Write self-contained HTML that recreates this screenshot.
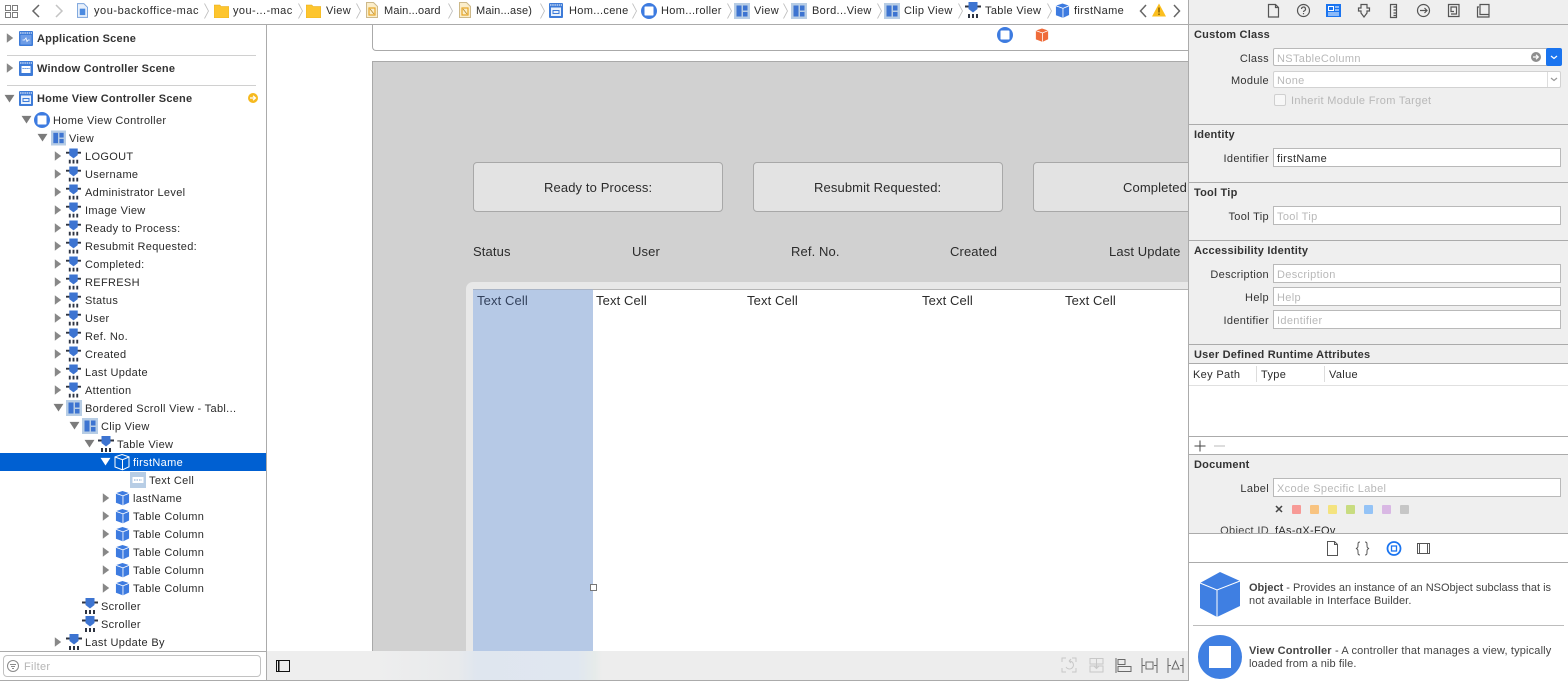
<!DOCTYPE html>
<html><head><meta charset="utf-8">
<style>
html,body{margin:0;padding:0;background:#fff}
#r{position:relative;width:1568px;height:681px;overflow:hidden;background:#fff;font-family:"Liberation Sans",sans-serif;font-size:11px;color:#2a2a2a}
#r div,#r span,#r svg{position:absolute}
#r svg{overflow:visible}
.t{white-space:nowrap;line-height:18px;height:18px;letter-spacing:.33px;margin-top:1px}
.b{font-weight:bold;letter-spacing:.22px;color:#333}
.c{font-size:13px;letter-spacing:.12px;color:#2b2b2b}
.l{text-align:right;right:299px;color:#333}
.f{left:1273px;width:286px;background:#fff;border:1px solid #b9b9b9}
.p{color:#b8b8b8}
.ln{height:1px;background:#ababab}
.btn{top:162px;height:48px;background:#e3e3e3;border:1px solid #a8a8a8;border-radius:4px}
</style></head><body><div id="r">
<svg width="0" height="0" style="left:0;top:0">
<defs>
<symbol id="v" viewBox="0 0 16 16"><rect width="16" height="16" fill="#b7cde5"/><rect x="2.500" y="2.500" width="5" height="11" fill="#3d74d1"/><rect x="9" y="2.500" width="4.500" height="5" fill="#3d74d1"/><rect x="9" y="9" width="4.500" height="4.500" fill="#3d74d1"/></symbol>
<symbol id="n" viewBox="0 0 16 16"><rect x="0" y="3.500" width="16" height="2" fill="#2d3340"/><path d="M3.500 0h9v7L8 10.500 3.500 7z" fill="#3d74d1"/><rect x="3" y="12" width="2" height="4" fill="#2d3340"/><rect x="7" y="12" width="2" height="4" fill="#2d3340"/><rect x="11" y="12" width="2" height="4" fill="#2d3340"/></symbol>
<symbol id="q" viewBox="0 0 16 16"><path d="M8 .5l7 2.300v10L8.500 15.800 1 13V2.800z" fill="#3d7be0"/><path d="M1 3l7.500 2.700L15 3M8.500 5.700v10" fill="none" stroke="#fff" stroke-width=".9"/></symbol>
<symbol id="s" viewBox="0 0 14 15"><rect width="14" height="15" rx="1" fill="#3d7bd8"/><path d="M1 2h12" stroke="#fff" stroke-width="1" stroke-dasharray="1.500 .7"/></symbol>
<symbol id="c" viewBox="0 0 16 16"><circle cx="8" cy="8" r="8" fill="#3d7be0"/><rect x="3.500" y="3.500" width="9" height="9" rx=".8" fill="#fff"/></symbol>
<symbol id="dn" viewBox="0 0 10 10" overflow="visible"><path d="M-.5 1h11L5 9.500z" fill="#7b7b7b"/></symbol>
<symbol id="rt" viewBox="0 0 10 10" overflow="visible"><path d="M1-1v12l8-6z" fill="#888"/></symbol>
<symbol id="fd" viewBox="0 0 15 14"><path d="M0 1h6l1 1.500h8V14H0z" fill="#fdc52e" stroke="#e5a813" stroke-width=".5"/></symbol>
<symbol id="sb" viewBox="0 0 12 16"><path d="M.5.500h7l4 4v11H.5z" fill="#fbeecb" stroke="#cdb98a"/><rect x="3" y="6" width="6" height="7" fill="none" stroke="#e6a526" stroke-width="1.200"/><path d="M4 7l4 5" stroke="#b98a2a" stroke-width=".8"/></symbol>
<symbol id="sp" viewBox="0 0 5 16"><path d="M.5.500L4.500 8 .5 15.500" fill="none" stroke="#bdbdbd" stroke-width=".8"/></symbol>
</defs></svg>

<!-- canvas -->
<div style="left:372px;top:24px;width:816px;height:26px;border-left:1px solid #aaa;border-bottom:1px solid #aaa;border-bottom-left-radius:4px;background:#fff"></div>
<div style="left:372px;top:61px;width:816px;height:590px;background:#d1d1d1;border-left:1px solid #a9a9a9;border-top:1px solid #a9a9a9;box-sizing:border-box"></div>
<svg style="left:997px;top:27px" width="16" height="16"><use href="#c"/></svg>
<svg style="left:1035px;top:28px" width="14" height="14" viewBox="0 0 16 16"><path d="M8 .5l7 2.300v10L8.500 15.800 1 13V2.800z" fill="#ef6b3a"/><path d="M1 3l7.500 2.700L15 3M8.500 5.700v10" fill="none" stroke="#fff" stroke-width=".9"/></svg>
<div class="btn" style="left:473px;width:248px"></div>
<div class="btn" style="left:753px;width:248px"></div>
<div class="btn" style="left:1033px;width:170px"></div>
<div class="t c" style="left:544px;top:178px">Ready to Process:</div>
<div class="t c" style="left:814px;top:178px">Resubmit Requested:</div>
<div class="t c" style="left:1123px;top:178px;width:65px;overflow:hidden">Completed:</div>
<div class="t c" style="left:473px;top:242px">Status</div>
<div class="t c" style="left:632px;top:242px">User</div>
<div class="t c" style="left:791px;top:242px">Ref. No.</div>
<div class="t c" style="left:950px;top:242px">Created</div>
<div class="t c" style="left:1109px;top:242px">Last Update</div>
<div style="left:466px;top:282px;width:722px;height:369px;background:#e8e8e8;border-top-left-radius:7px"></div>
<div style="left:473px;top:289px;width:715px;height:362px;background:#fff;border-top:1px solid #b5b5b5;box-sizing:border-box"></div>
<div style="left:473px;top:289px;width:120px;height:362px;background:#b6c9e6;border-top:1px solid #a9b4c6;box-sizing:border-box"></div>
<div class="t c" style="left:477px;top:291px;color:#33415c">Text Cell</div>
<div class="t c" style="left:596px;top:291px">Text Cell</div>
<div class="t c" style="left:747px;top:291px">Text Cell</div>
<div class="t c" style="left:922px;top:291px">Text Cell</div>
<div class="t c" style="left:1065px;top:291px">Text Cell</div>
<div style="left:590px;top:584px;width:5px;height:5px;background:#fff;border:1px solid #777"></div>

<!-- canvas bottom bar -->
<div style="left:267px;top:651px;width:921px;height:29px;background:linear-gradient(90deg,#eee 0,#eee 105px,#e8eaec 190px,#dfe6ef 210px,#e0e7f0 310px,#e6ebea 328px,#ededed 335px,#ededed 100%)"></div>
<div class="ln" style="left:267px;top:680px;width:921px"></div>
<svg style="left:276px;top:660px" width="14" height="12"><rect x=".5" y=".5" width="13" height="11" fill="none" stroke="#111"/><rect x="2" y="1" width="1.500" height="10" fill="#111"/></svg>
<svg style="left:1061px;top:657px" width="124" height="18" fill="none" stroke="#6a6a6a" stroke-width="1">
<g stroke="#c8c8c8"><path d="M1 5V1h4M11 1h4v4M15 11v4h-4M5 15H1v-4"/><path d="M8 4a4 4 0 1 1-3 6M8 4l2-2M8 4l2 2"/></g>
<g stroke="#c8c8c8"><rect x="29" y="1.500" width="13" height="5.500"/><rect x="29" y="9" width="13" height="6"/><path d="M35.500 1v10M33 9l2.500 2.500L38 9"/></g>
<path d="M55 1v15M57 2.500h7v5h-7zM57 9.500h13v5H57z"/>
<path d="M81 1v15M96 1v15M81 8.500h3M93 8.500h3M85 5h7v7h-7z"/>
<path d="M107 1v15M122 1v15M107 8.500h3M119 8.500h3M114.500 4l3.500 8h-7z"/>
</svg>

<!-- left panel -->
<div style="left:0;top:25px;width:266px;height:656px;background:#fff"></div>
<div style="left:266px;top:24px;width:1px;height:657px;background:#ababab"></div>
<svg style="left:6px;top:34px" width="8" height="8"><use href="#rt"/></svg>
<svg style="left:19px;top:31px" width="14" height="15"><use href="#s"/><rect x="1.500" y="4" width="11" height="9.500" fill="#6d9ce6"/><path d="M3.500 9l2 0 1.500-2 1 3.500 1.200-1.500h1.500" fill="none" stroke="#fff" stroke-width=".8"/></svg>
<div class="t b" style="left:37px;top:29px">Application Scene</div>
<div class="ln" style="left:7px;top:55px;width:249px;background:#d0d0d0"></div>
<svg style="left:6px;top:64px" width="8" height="8"><use href="#rt"/></svg>
<svg style="left:19px;top:61px" width="14" height="15"><use href="#s"/><rect x="2.500" y="5" width="9" height="7" fill="#fff"/><path d="M3.500 7.500h7" stroke="#3d7bd8" stroke-dasharray="1.200 .8"/></svg>
<div class="t b" style="left:37px;top:59px">Window Controller Scene</div>
<div class="ln" style="left:7px;top:85px;width:249px;background:#d0d0d0"></div>
<svg style="left:5px;top:94px" width="9" height="9"><use href="#dn"/></svg>
<svg style="left:19px;top:91px" width="14" height="15"><use href="#s"/><rect x="2" y="4.500" width="10" height="8.500" fill="#e9f1fc"/><rect x="4" y="7.500" width="6" height="3" fill="none" stroke="#3d7bd8"/></svg>
<div class="t b" style="left:37px;top:89px">Home View Controller Scene</div>
<svg style="left:248px;top:93px" width="10" height="10"><circle cx="5" cy="5" r="5" fill="#f6b91f"/><path d="M2 5h5M5 2.800L7.500 5 5 7.200" stroke="#fff" stroke-width="1.200" fill="none"/></svg>

<svg style="left:22px;top:115px" width="9" height="9"><use href="#dn"/></svg>
<svg style="left:34px;top:112px" width="16" height="16"><use href="#c"/></svg>
<div class="t" style="left:53px;top:111px">Home View Controller</div>
<svg style="left:38px;top:133px" width="9" height="9"><use href="#dn"/></svg>
<svg style="left:51px;top:130px" width="15" height="16"><use href="#v"/></svg>
<div class="t" style="left:69px;top:129px">View</div>

<svg style="left:54px;top:152px" width="8" height="8"><use href="#rt"/></svg><svg style="left:66px;top:148px" width="15" height="16"><use href="#n"/></svg><div class="t" style="left:85px;top:147px">LOGOUT</div>
<svg style="left:54px;top:170px" width="8" height="8"><use href="#rt"/></svg><svg style="left:66px;top:166px" width="15" height="16"><use href="#n"/></svg><div class="t" style="left:85px;top:165px">Username</div>
<svg style="left:54px;top:188px" width="8" height="8"><use href="#rt"/></svg><svg style="left:66px;top:184px" width="15" height="16"><use href="#n"/></svg><div class="t" style="left:85px;top:183px">Administrator Level</div>
<svg style="left:54px;top:206px" width="8" height="8"><use href="#rt"/></svg><svg style="left:66px;top:202px" width="15" height="16"><use href="#n"/></svg><div class="t" style="left:85px;top:201px">Image View</div>
<svg style="left:54px;top:224px" width="8" height="8"><use href="#rt"/></svg><svg style="left:66px;top:220px" width="15" height="16"><use href="#n"/></svg><div class="t" style="left:85px;top:219px">Ready to Process:</div>
<svg style="left:54px;top:242px" width="8" height="8"><use href="#rt"/></svg><svg style="left:66px;top:238px" width="15" height="16"><use href="#n"/></svg><div class="t" style="left:85px;top:237px">Resubmit Requested:</div>
<svg style="left:54px;top:260px" width="8" height="8"><use href="#rt"/></svg><svg style="left:66px;top:256px" width="15" height="16"><use href="#n"/></svg><div class="t" style="left:85px;top:255px">Completed:</div>
<svg style="left:54px;top:278px" width="8" height="8"><use href="#rt"/></svg><svg style="left:66px;top:274px" width="15" height="16"><use href="#n"/></svg><div class="t" style="left:85px;top:273px">REFRESH</div>
<svg style="left:54px;top:296px" width="8" height="8"><use href="#rt"/></svg><svg style="left:66px;top:292px" width="15" height="16"><use href="#n"/></svg><div class="t" style="left:85px;top:291px">Status</div>
<svg style="left:54px;top:314px" width="8" height="8"><use href="#rt"/></svg><svg style="left:66px;top:310px" width="15" height="16"><use href="#n"/></svg><div class="t" style="left:85px;top:309px">User</div>
<svg style="left:54px;top:332px" width="8" height="8"><use href="#rt"/></svg><svg style="left:66px;top:328px" width="15" height="16"><use href="#n"/></svg><div class="t" style="left:85px;top:327px">Ref. No.</div>
<svg style="left:54px;top:350px" width="8" height="8"><use href="#rt"/></svg><svg style="left:66px;top:346px" width="15" height="16"><use href="#n"/></svg><div class="t" style="left:85px;top:345px">Created</div>
<svg style="left:54px;top:368px" width="8" height="8"><use href="#rt"/></svg><svg style="left:66px;top:364px" width="15" height="16"><use href="#n"/></svg><div class="t" style="left:85px;top:363px">Last Update</div>
<svg style="left:54px;top:386px" width="8" height="8"><use href="#rt"/></svg><svg style="left:66px;top:382px" width="15" height="16"><use href="#n"/></svg><div class="t" style="left:85px;top:381px">Attention</div>

<svg style="left:54px;top:403px" width="9" height="9"><use href="#dn"/></svg><svg style="left:66px;top:400px" width="16" height="16"><use href="#v"/></svg><div class="t" style="left:85px;top:399px">Bordered Scroll View - Tabl...</div>
<svg style="left:70px;top:421px" width="9" height="9"><use href="#dn"/></svg><svg style="left:82px;top:418px" width="16" height="16"><use href="#v"/></svg><div class="t" style="left:101px;top:417px">Clip View</div>
<svg style="left:85px;top:439px" width="9" height="9"><use href="#dn"/></svg><svg style="left:98px;top:436px" width="16" height="16"><use href="#n"/></svg><div class="t" style="left:117px;top:435px">Table View</div>

<div style="left:0;top:453px;width:266px;height:18px;background:#0060d2"></div>
<svg style="left:101px;top:457px" width="9" height="9" viewBox="0 0 10 10"><path d="M-.5 1h11L5 9.500z" fill="#fff"/></svg>
<svg style="left:114px;top:454px" width="16" height="16" viewBox="0 0 16 16"><path d="M8 .5l7 2.300v10L8.500 15.800 1 13V2.800z" fill="none" stroke="#fff"/><path d="M1 3l7.500 2.700L15 3M8.500 5.700v10" fill="none" stroke="#fff"/></svg>
<div class="t" style="left:133px;top:453px;color:#fff">firstName</div>

<svg style="left:130px;top:472px" width="16" height="16"><rect width="16" height="16" fill="#b7cde5"/><rect x="2.500" y="5" width="11" height="6" fill="#fff"/><path d="M4 8h8" stroke="#7fa2cc" stroke-dasharray="1.500 1"/></svg>
<div class="t" style="left:149px;top:471px">Text Cell</div>

<svg style="left:102px;top:494px" width="8" height="8"><use href="#rt"/></svg><svg style="left:115px;top:490px" width="15" height="16"><use href="#q"/></svg><div class="t" style="left:133px;top:489px">lastName</div>
<svg style="left:102px;top:512px" width="8" height="8"><use href="#rt"/></svg><svg style="left:115px;top:508px" width="15" height="16"><use href="#q"/></svg><div class="t" style="left:133px;top:507px">Table Column</div>
<svg style="left:102px;top:530px" width="8" height="8"><use href="#rt"/></svg><svg style="left:115px;top:526px" width="15" height="16"><use href="#q"/></svg><div class="t" style="left:133px;top:525px">Table Column</div>
<svg style="left:102px;top:548px" width="8" height="8"><use href="#rt"/></svg><svg style="left:115px;top:544px" width="15" height="16"><use href="#q"/></svg><div class="t" style="left:133px;top:543px">Table Column</div>
<svg style="left:102px;top:566px" width="8" height="8"><use href="#rt"/></svg><svg style="left:115px;top:562px" width="15" height="16"><use href="#q"/></svg><div class="t" style="left:133px;top:561px">Table Column</div>
<svg style="left:102px;top:584px" width="8" height="8"><use href="#rt"/></svg><svg style="left:115px;top:580px" width="15" height="16"><use href="#q"/></svg><div class="t" style="left:133px;top:579px">Table Column</div>
<svg style="left:82px;top:598px" width="16" height="16"><use href="#n"/></svg><div class="t" style="left:101px;top:597px">Scroller</div>
<svg style="left:82px;top:616px" width="16" height="16"><use href="#n"/></svg><div class="t" style="left:101px;top:615px">Scroller</div>
<svg style="left:54px;top:638px" width="8" height="8"><use href="#rt"/></svg><svg style="left:66px;top:634px" width="16" height="16"><use href="#n"/></svg><div class="t" style="left:85px;top:633px">Last Update By</div>

<div style="left:0;top:651px;width:266px;height:29px;background:#fff;border-top:1px solid #ababab;box-sizing:border-box"></div>
<div style="left:3px;top:655px;width:256px;height:20px;border:1px solid #c2c2c2;border-radius:4px;background:#fff"></div>
<svg style="left:7px;top:660px" width="12" height="12" fill="none" stroke="#8a8a8a"><circle cx="6" cy="6" r="5.500"/><path d="M3 4.500h6M4 6.500h4M5 8.500h2"/></svg>
<div class="t" style="left:24px;top:657px;color:#b5b5b5">Filter</div>
<div class="ln" style="left:0;top:680px;width:267px"></div>

<!-- top bar -->
<div style="left:0;top:0;width:1188px;height:24px;background:#fff"></div>
<div class="ln" style="left:0;top:24px;width:1188px"></div>
<svg style="left:5px;top:5px" width="13" height="13" fill="none" stroke="#6e6e6e" stroke-width=".9"><rect x=".5" y=".5" width="5" height="5"/><rect x="7.500" y=".5" width="5" height="5"/><rect x=".5" y="7.500" width="5" height="5"/><rect x="7.500" y="7.500" width="5" height="5"/></svg>
<svg style="left:31px;top:4px" width="10" height="14" fill="none" stroke="#666" stroke-width="1.500"><path d="M8 1L2 7l6 6"/></svg>
<svg style="left:54px;top:4px" width="10" height="14" fill="none" stroke="#c4c4c4" stroke-width="1.500"><path d="M2 1l6 6-6 6"/></svg>
<svg style="left:77px;top:3px" width="11" height="15" viewBox="0 0 12 16"><path d="M.5.500h7l4 4v11H.5z" fill="#e8f0fb" stroke="#7aa3dc"/><rect x="3" y="6" width="6" height="7" fill="#4b8ae0"/></svg>
<div class="t" style="left:94px;top:1px;letter-spacing:.55px">you-backoffice-mac</div>
<svg style="left:204px;top:3px" width="5" height="16"><use href="#sp"/></svg>
<svg style="left:214px;top:4px" width="15" height="14"><use href="#fd"/></svg>
<div class="t" style="left:233px;top:1px;letter-spacing:.42px">you-...-mac</div>
<svg style="left:298px;top:3px" width="5" height="16"><use href="#sp"/></svg>
<svg style="left:306px;top:4px" width="15" height="14"><use href="#fd"/></svg>
<div class="t" style="left:326px;top:1px">View</div>
<svg style="left:356px;top:3px" width="5" height="16"><use href="#sp"/></svg>
<svg style="left:366px;top:2px" width="12" height="16"><use href="#sb"/></svg>
<div class="t" style="left:384px;top:1px;letter-spacing:.15px">Main...oard</div>
<svg style="left:448px;top:3px" width="5" height="16"><use href="#sp"/></svg>
<svg style="left:459px;top:2px" width="12" height="16"><use href="#sb"/></svg>
<div class="t" style="left:476px;top:1px;letter-spacing:.15px">Main...ase)</div>
<svg style="left:540px;top:3px" width="5" height="16"><use href="#sp"/></svg>
<svg style="left:549px;top:3px" width="14" height="15"><use href="#s"/><rect x="2" y="4.500" width="10" height="8.500" fill="#e9f1fc"/><rect x="4" y="7.500" width="6" height="3" fill="none" stroke="#3d7bd8"/></svg>
<div class="t" style="left:569px;top:1px">Hom...cene</div>
<svg style="left:632px;top:3px" width="5" height="16"><use href="#sp"/></svg>
<svg style="left:641px;top:3px" width="16" height="16"><use href="#c"/></svg>
<div class="t" style="left:661px;top:1px">Hom...roller</div>
<svg style="left:727px;top:3px" width="5" height="16"><use href="#sp"/></svg>
<svg style="left:734px;top:3px" width="16" height="16"><use href="#v"/></svg>
<div class="t" style="left:754px;top:1px">View</div>
<svg style="left:783px;top:3px" width="5" height="16"><use href="#sp"/></svg>
<svg style="left:791px;top:3px" width="16" height="16"><use href="#v"/></svg>
<div class="t" style="left:812px;top:1px">Bord...View</div>
<svg style="left:877px;top:3px" width="5" height="16"><use href="#sp"/></svg>
<svg style="left:884px;top:3px" width="16" height="16"><use href="#v"/></svg>
<div class="t" style="left:904px;top:1px">Clip View</div>
<svg style="left:958px;top:3px" width="5" height="16"><use href="#sp"/></svg>
<svg style="left:965px;top:2px" width="16" height="16"><use href="#n"/></svg>
<div class="t" style="left:985px;top:1px">Table View</div>
<svg style="left:1047px;top:3px" width="5" height="16"><use href="#sp"/></svg>
<svg style="left:1055px;top:3px" width="15" height="15"><use href="#q"/></svg>
<div class="t" style="left:1074px;top:1px">firstName</div>
<svg style="left:1139px;top:4px" width="9" height="14" fill="none" stroke="#666" stroke-width="1.500"><path d="M7 1L1.500 7 7 13"/></svg>
<svg style="left:1152px;top:3px" width="14" height="14"><path d="M7 .5l7 13H0z" fill="#fbbf1f"/><path d="M7 4.500v5M7 10.500v1.500" stroke="#6a4a00" stroke-width="1.200"/></svg>
<svg style="left:1172px;top:4px" width="9" height="14" fill="none" stroke="#666" stroke-width="1.500"><path d="M2 1l5.500 6L2 13"/></svg>

<!-- inspector -->
<div style="left:1188px;top:0;width:1px;height:681px;background:#ababab;z-index:5"></div>
<div style="left:1189px;top:0;width:379px;height:533px;background:#efefef"></div>
<div class="ln" style="left:1189px;top:24px;width:379px"></div>
<svg style="left:1260px;top:0" width="240" height="24" fill="none" stroke="#555" stroke-width="1.200">
<path d="M8.500 4.500h7l3 3v9.500h-10zM15.500 4.500v3h3"/>
<circle cx="43.500" cy="10.500" r="6"/><path d="M41.500 9a2 2 0 1 1 2.700 1.900c-.5.200-.7.500-.7 1.100M43.500 13v1.200"/>
<rect x="66" y="4" width="15" height="13" fill="#1a74f0" stroke="none"/><rect x="68.500" y="6.500" width="5" height="4" stroke="#fff" stroke-width="1"/><path d="M75 7h4M75 10h4M68 13h11M68 15h11" stroke="#fff" stroke-width="1"/>
<path d="M101 4.500h6v3.500h2.500v3H107v2l-3 4-3-4v-2h-2.500V8H101z"/>
<path d="M130.500 4.500h6v13h-6zM133.500 7h3M133.500 10h3M133.500 13h3M133.500 15.500h3"/>
<circle cx="163.500" cy="10.500" r="6"/><path d="M160 10.500h7M164.500 8l2.500 2.500-2.500 2.500"/>
<path d="M188.500 4.500h10.500v12h-10.500zM191 14h5.500V7H191v4.500h3"/>
<path d="M219 7h-1.500v10h11.500V4.500M220 4.500h9v10h-9z"/>
</svg>

<div class="t b" style="left:1194px;top:25px">Custom Class</div>
<div class="t l" style="top:49px">Class</div>
<div class="f" style="top:48px;height:16px;border-radius:2px"></div>
<div class="t p" style="left:1277px;top:49px">NSTableColumn</div>
<svg style="left:1531px;top:52px" width="10" height="10"><circle cx="5" cy="5" r="5" fill="#8e8e8e"/><path d="M2 5h5M5 2.800L7.300 5 5 7.200" stroke="#fff" stroke-width="1.200" fill="none"/></svg>
<svg style="left:1546px;top:48px" width="16" height="18"><rect width="16" height="18" rx="2" fill="#1a74ef"/><path d="M5 8l3 2.500L11 8" stroke="#fff" stroke-width="1.200" fill="none"/></svg>
<div class="t l" style="top:71px">Module</div>
<div class="f" style="top:71px;height:15px;border-radius:2px;border-color:#d2d2d2"></div>
<div class="t p" style="left:1277px;top:71px">None</div>
<svg style="left:1547px;top:72px" width="14" height="15"><path d="M.5 0v15" stroke="#ddd"/><path d="M4 6l3 2.500L10 6" stroke="#999" stroke-width="1.200" fill="none"/></svg>
<div style="left:1274px;top:94px;width:10px;height:10px;background:#f7f7f7;border:1px solid #cfcfcf;border-radius:2px"></div>
<div class="t p" style="left:1291px;top:91px">Inherit Module From Target</div>
<div class="ln" style="left:1189px;top:124px;width:379px"></div>

<div class="t b" style="left:1194px;top:125px">Identity</div>
<div class="t l" style="top:149px">Identifier</div>
<div class="f" style="top:148px;height:17px"></div>
<div class="t" style="left:1277px;top:149px">firstName</div>
<div class="ln" style="left:1189px;top:182px;width:379px"></div>

<div class="t b" style="left:1194px;top:183px">Tool Tip</div>
<div class="t l" style="top:207px">Tool Tip</div>
<div class="f" style="top:206px;height:17px"></div>
<div class="t p" style="left:1277px;top:207px">Tool Tip</div>
<div class="ln" style="left:1189px;top:240px;width:379px"></div>

<div class="t b" style="left:1194px;top:241px">Accessibility Identity</div>
<div class="t l" style="top:265px">Description</div>
<div class="f" style="top:264px;height:17px"></div>
<div class="t p" style="left:1277px;top:265px">Description</div>
<div class="t l" style="top:288px">Help</div>
<div class="f" style="top:287px;height:17px"></div>
<div class="t p" style="left:1277px;top:288px">Help</div>
<div class="t l" style="top:311px">Identifier</div>
<div class="f" style="top:310px;height:17px"></div>
<div class="t p" style="left:1277px;top:311px">Identifier</div>
<div class="ln" style="left:1189px;top:344px;width:379px"></div>

<div class="t b" style="left:1194px;top:345px">User Defined Runtime Attributes</div>
<div style="left:1189px;top:363px;width:379px;height:91px;background:#fff"></div>
<div class="ln" style="left:1189px;top:363px;width:379px"></div>
<div class="t" style="left:1193px;top:365px">Key Path</div>
<div class="t" style="left:1261px;top:365px">Type</div>
<div class="t" style="left:1329px;top:365px">Value</div>
<div style="left:1256px;top:366px;width:1px;height:16px;background:#ddd"></div>
<div style="left:1324px;top:366px;width:1px;height:16px;background:#ddd"></div>
<div style="left:1189px;top:385px;width:379px;height:1px;background:#e0e0e0"></div>
<div class="ln" style="left:1189px;top:436px;width:379px"></div>
<svg style="left:1194px;top:440px" width="40" height="12" fill="none"><path d="M6 .5v11M.5 6h11" stroke="#444"/><path d="M20 6h11" stroke="#bbb"/></svg>
<div class="ln" style="left:1189px;top:454px;width:379px"></div>

<div class="t b" style="left:1194px;top:455px">Document</div>
<div class="t l" style="top:479px">Label</div>
<div class="f" style="top:478px;height:17px"></div>
<div class="t p" style="left:1277px;top:479px">Xcode Specific Label</div>
<svg style="left:1275px;top:505px" width="8" height="8"><path d="M1 1l6 6M7 1L1 7" stroke="#444" stroke-width="1.500"/></svg>
<div style="left:1292px;top:505px;width:9px;height:9px;background:#f79a96;border-radius:1px"></div>
<div style="left:1310px;top:505px;width:9px;height:9px;background:#f8c380;border-radius:1px"></div>
<div style="left:1328px;top:505px;width:9px;height:9px;background:#f4e37f;border-radius:1px"></div>
<div style="left:1346px;top:505px;width:9px;height:9px;background:#c8dc80;border-radius:1px"></div>
<div style="left:1364px;top:505px;width:9px;height:9px;background:#94c3f6;border-radius:1px"></div>
<div style="left:1382px;top:505px;width:9px;height:9px;background:#d9b8e4;border-radius:1px"></div>
<div style="left:1400px;top:505px;width:9px;height:9px;background:#c6c6c6;border-radius:1px"></div>
<div class="t l" style="top:521px;color:#444">Object ID</div>
<div class="t" style="left:1275px;top:521px">fAs-gX-FOv</div>

<!-- library -->
<div style="left:1189px;top:533px;width:379px;height:148px;background:#fff"></div>
<div class="ln" style="left:1189px;top:533px;width:379px"></div>
<svg style="left:1327px;top:541px" width="110" height="15" fill="none" stroke="#555">
<path d="M.5.500h7l3 3v11H.5zM7.500.500v3h3"/>
<path d="M33 1c-2 0-2 1-2 3s0 3-2 3.500c2 .5 2 1.500 2 3.500s0 3 2 3M38 1c2 0 2 1 2 3s0 3 2 3.500c-2 .5-2 1.500-2 3.500s0 3-2 3"/>
<circle cx="67" cy="7.500" r="6.500" stroke="#1a74f0" stroke-width="1.800"/><rect x="64.500" y="5" width="5" height="5" stroke="#1a74f0" stroke-width="1.300"/>
<path d="M90.500 2.500h12v10h-12zM92.500 2.500v10M100.500 2.500v10"/>
</svg>
<div class="ln" style="left:1189px;top:562px;width:379px"></div>
<svg style="left:1200px;top:572px" width="40" height="45" viewBox="0 0 40 45"><path d="M20 0l20 9v25L17 45 0 36V11z" fill="#3f7fe2"/><path d="M0 11l17 7 23-9M17 18v27" fill="none" stroke="#fff" stroke-width="1"/></svg>
<div class="t" style="left:1249px;top:578px;color:#444;letter-spacing:0"><b>Object</b> - Provides an instance of an NSObject subclass that is</div>
<div class="t" style="left:1249px;top:591px;color:#444;letter-spacing:.1px">not available in Interface Builder.</div>
<div class="ln" style="left:1193px;top:625px;width:371px;background:#bdbdbd"></div>
<svg style="left:1198px;top:635px" width="44" height="44"><circle cx="22" cy="22" r="22" fill="#3f7fe2"/><rect x="11" y="11" width="22" height="22" fill="#fff"/></svg>
<div class="t" style="left:1249px;top:641px;color:#444;letter-spacing:.15px"><b>View Controller</b> - A controller that manages a view, typically</div>
<div class="t" style="left:1249px;top:654px;color:#444;letter-spacing:.1px">loaded from a nib file.</div>
</div></body></html>
